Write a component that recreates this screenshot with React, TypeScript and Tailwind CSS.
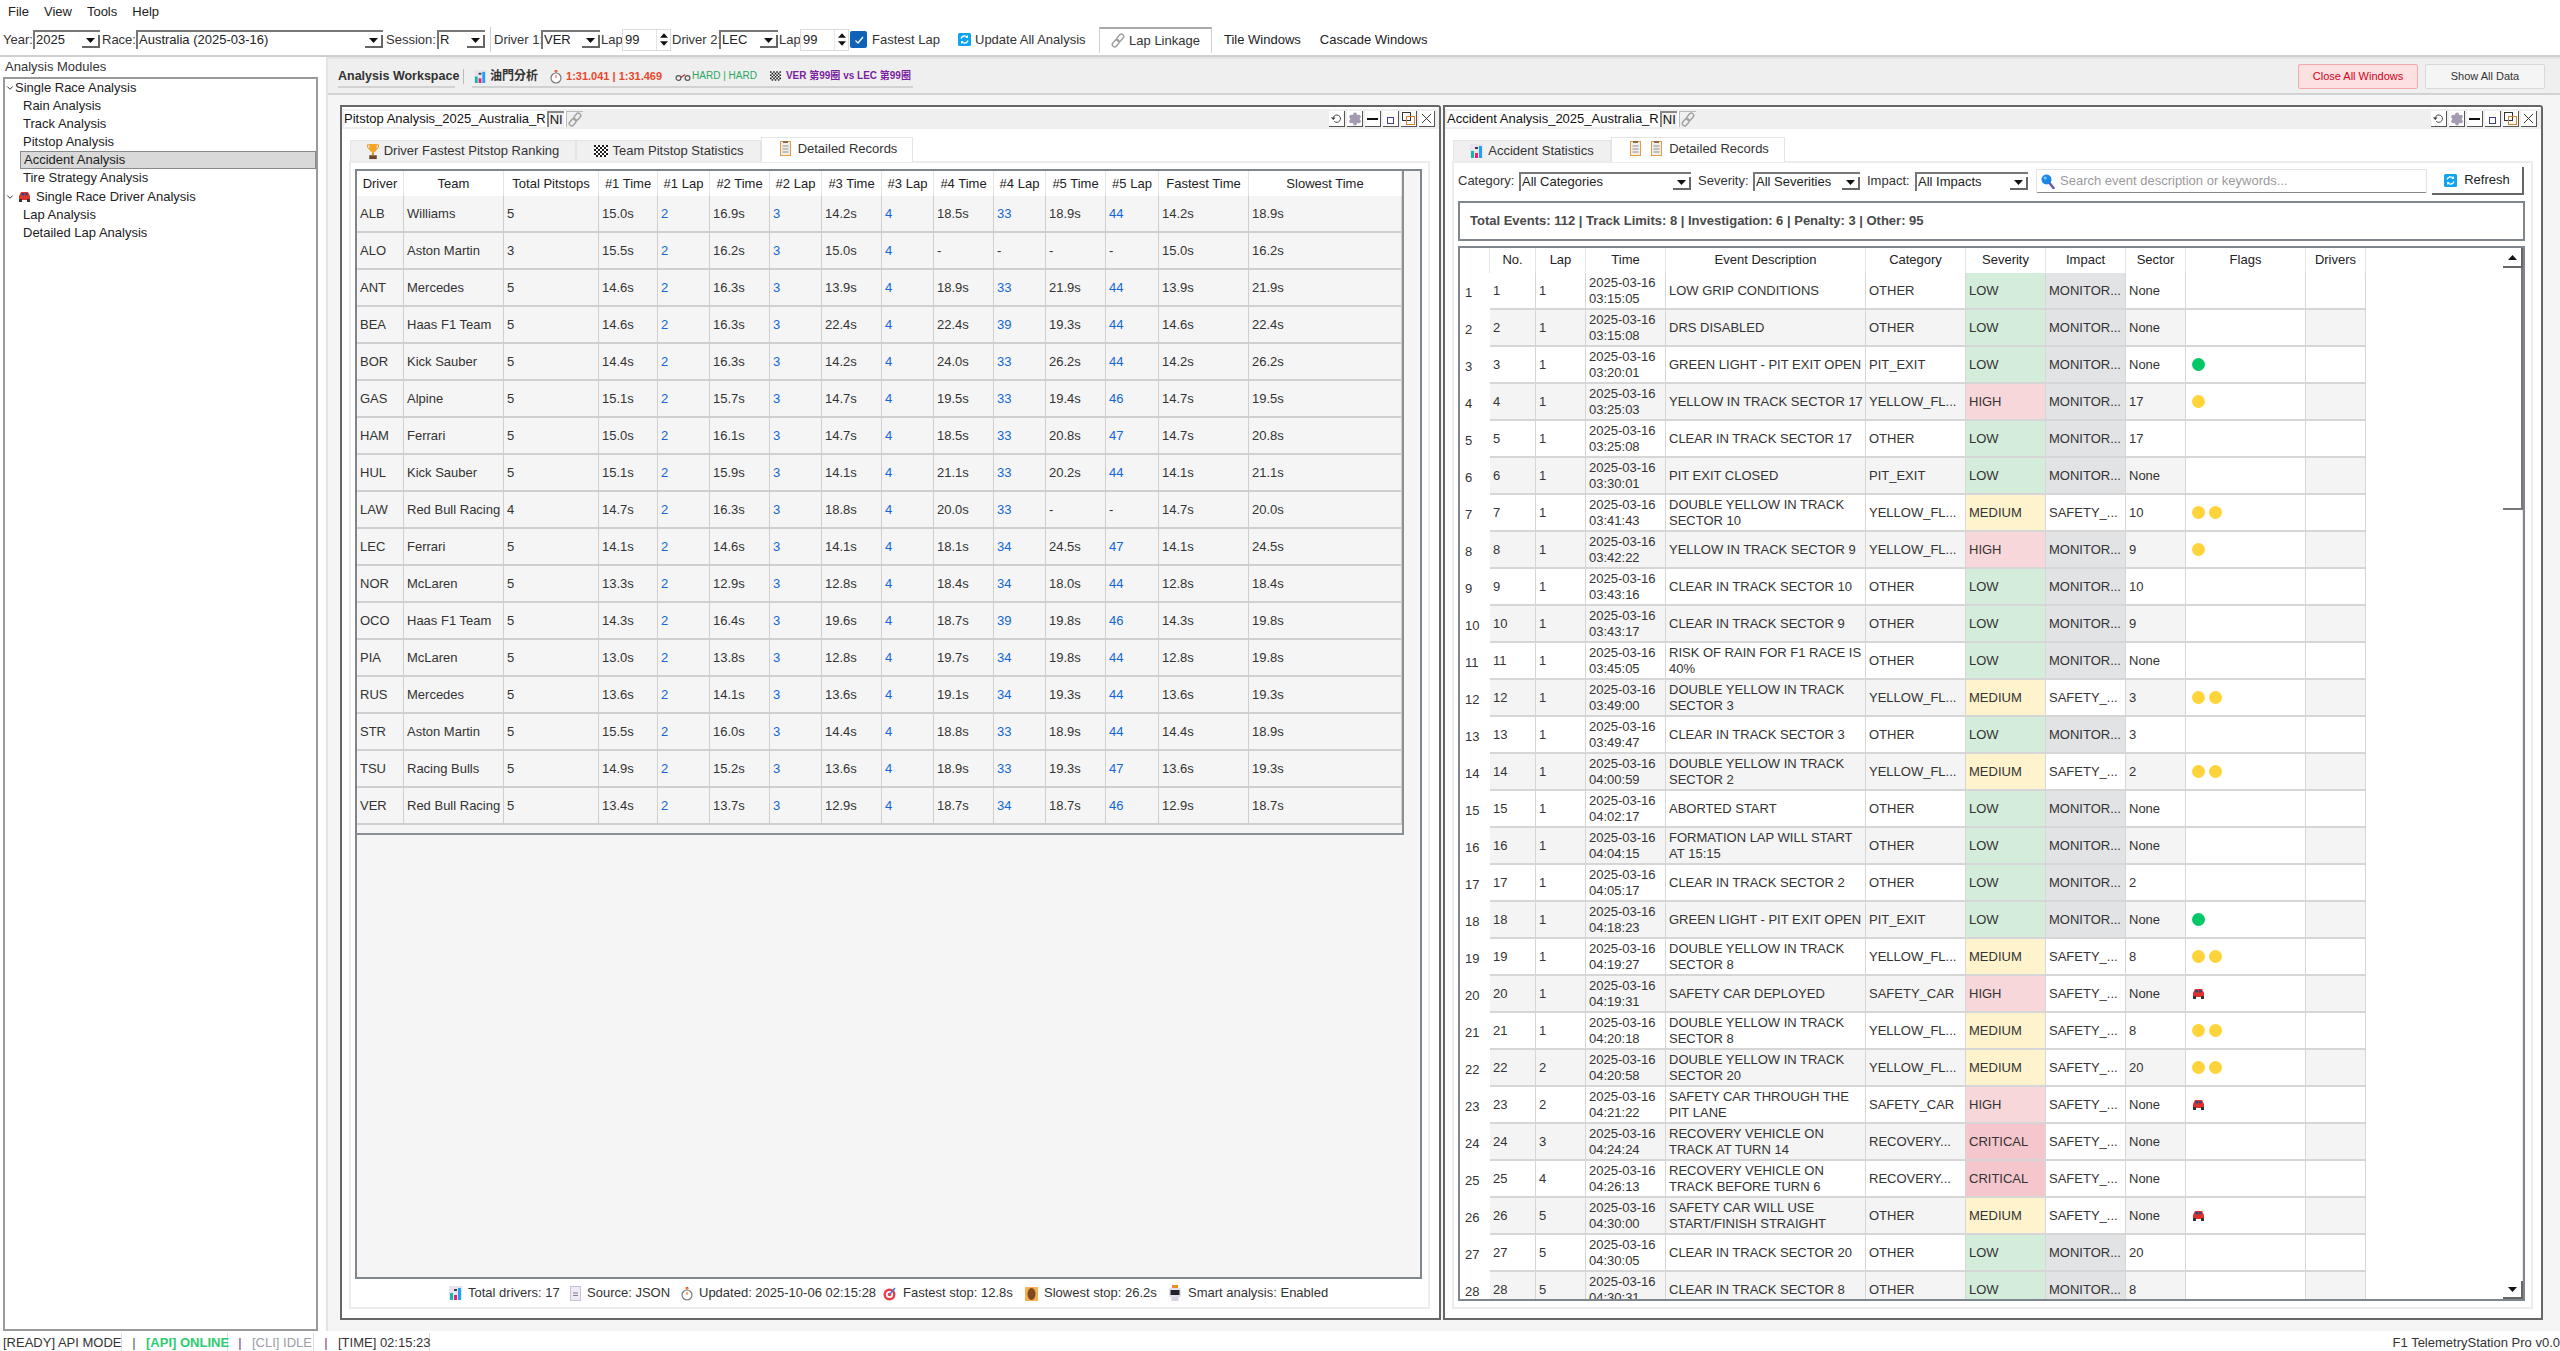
import { ChevronDown, Settings } from "lucide-react";
import type { ReactNode } from "react";

const font = "font-['Liberation_Sans','Noto_Sans_CJK_TC',sans-serif]";

/* small emoji-like icons */
const BarsIcon = ({ className = "w-[13px] h-[14px]" }: { className?: string }) => (
  <svg viewBox="0 0 13 14" className={className}>
    <rect width="13" height="14" fill="#e8e4ee" />
    <rect x="1" y="7" width="3" height="7" fill="#14b8a6" />
    <rect x="5" y="9" width="3" height="5" fill="#ec1e79" />
    <rect x="9" y="2" width="3" height="12" fill="#1da1f2" />
    <rect x="5" y="3" width="3" height="2" fill="#3b3b4f" />
  </svg>
);
const MemoIcon = () => (
  <svg viewBox="0 0 11 15" className="w-[11px] h-[15px]">
    <rect x="0.5" y="0.5" width="10" height="14" fill="#f0eee8" stroke="#e59a4a" />
    <rect x="3" y="0" width="5" height="2" fill="#8a6a4a" />
    <path d="M2.5 5h6M2.5 8h6M2.5 11h6" stroke="#8f8f8f" strokeWidth="1.2" />
  </svg>
);
const DocIcon = () => (
  <svg viewBox="0 0 11 15" className="w-[11px] h-[15px]">
    <rect x="0.5" y="0.5" width="10" height="14" fill="#efe9f5" stroke="#c9c2d6" />
    <path d="M3 7h5M3 9.5h5" stroke="#7d7d8c" />
  </svg>
);
const TrophyIcon = () => (
  <svg viewBox="0 0 12 18" className="w-[12px] h-[17px]">
    <path d="M2 1h8v4c0 3-2 5-4 5S2 8 2 5z" fill="#f5a623" />
    <path d="M2 2H0c0 3 1 4 3 5M10 2h2c0 3-1 4-3 5" fill="none" stroke="#d98e14" />
    <rect x="5" y="10" width="2" height="3" fill="#d98e14" />
    <rect x="2" y="13" width="8" height="4" fill="#6b4a2a" />
  </svg>
);
const CheckerIcon = ({ className = "w-[14px] h-[12px]" }: { className?: string }) => (
  <svg viewBox="0 0 14 12" className={className}>
    <rect width="14" height="12" fill="#fff" />
    <path d="M0 0h2v2H0zM4 0h2v2H4zM8 0h2v2H8zM12 0h2v2h-2zM2 2h2v2H2zM6 2h2v2H6zM10 2h2v2h-2zM0 4h2v2H0zM4 4h2v2H4zM8 4h2v2H8zM12 4h2v2h-2zM2 6h2v2H2zM6 6h2v2H6zM10 6h2v2h-2zM0 8h2v2H0zM4 8h2v2H4zM8 8h2v2H8zM12 8h2v2h-2zM2 10h2v2H2zM6 10h2v2H6zM10 10h2v2h-2z" fill="#1c1c1c" />
  </svg>
);
const CarIcon = () => (
  <svg viewBox="0 0 13 11" className="w-[13px] h-[11px]">
    <path d="M3 1h7l2 4v4H1V5z" fill="#e0322d" />
    <rect x="3.5" y="2" width="2.6" height="2.4" fill="#2b4a80" />
    <rect x="7" y="2" width="2.6" height="2.4" fill="#2b4a80" />
    <rect x="1" y="8" width="3" height="3" fill="#333" />
    <rect x="9" y="8" width="3" height="3" fill="#333" />
  </svg>
);
const WatchIcon = () => (
  <svg viewBox="0 0 12 15" className="w-[12px] h-[15px]">
    <circle cx="6" cy="9" r="5" fill="#fff" stroke="#777" strokeWidth="1.2" />
    <path d="M6 9V6M5 1.5h2V3H5z" stroke="#e2572b" fill="none" />
  </svg>
);
const TargetIcon = () => (
  <svg viewBox="0 0 14 15" className="w-[14px] h-[15px]">
    <circle cx="6.5" cy="8.5" r="6" fill="#ee3a43" />
    <circle cx="6.5" cy="8.5" r="3.6" fill="#fff" />
    <circle cx="6.5" cy="8.5" r="1.8" fill="#ee3a43" />
    <path d="M7 8l5-6" stroke="#2b7de0" strokeWidth="1.4" />
  </svg>
);
const BagIcon = () => (
  <svg viewBox="0 0 13 16" className="w-[13px] h-[16px]">
    <rect y="2" width="13" height="14" rx="1" fill="#f5b04f" />
    <ellipse cx="6.5" cy="9" rx="4" ry="6" fill="#7d4a24" />
  </svg>
);
const RobotIcon = () => (
  <svg viewBox="0 0 14 16" className="w-[14px] h-[16px]">
    <rect x="4" y="0" width="6" height="3" fill="#f08a24" />
    <rect x="1" y="3" width="12" height="9" rx="1" fill="#e4e0ea" />
    <rect x="2.5" y="5" width="9" height="5" fill="#22222c" />
    <rect x="3.5" y="12" width="7" height="4" fill="#d8d2e0" />
  </svg>
);
const RefreshIcon = ({ className = "w-[13px] h-[13px]" }: { className?: string }) => (
  <svg viewBox="0 0 13 13" className={className}>
    <rect width="13" height="13" rx="1.5" fill="#0ea5f0" />
    <path d="M3 5.5a3.6 3.6 0 0 1 6.4-1M10 7.5a3.6 3.6 0 0 1-6.4 1" fill="none" stroke="#fff" strokeWidth="1.3" />
    <path d="M10 2v3H7.2M3 11V8h2.8" fill="#fff" />
  </svg>
);
const SearchIcon = () => (
  <svg viewBox="0 0 14 15" className="w-[14px] h-[15px]">
    <path d="M8.5 9l4 5" stroke="#6d5aa8" strokeWidth="2.6" strokeLinecap="round" />
    <circle cx="5.5" cy="5.5" r="5" fill="#1c86e4" />
    <circle cx="4.2" cy="4" r="1.6" fill="#7fc4f7" />
  </svg>
);
const LinkIcon = () => (
  <svg viewBox="0 0 14 16" className="w-[14px] h-[15px]">
    <g fill="none" stroke="#a2a2a2" strokeWidth="1.6" transform="rotate(-50 7 8)">
      <rect x="-1" y="5.5" width="8.5" height="5" rx="2.5" />
      <rect x="6.5" y="5.5" width="8.5" height="5" rx="2.5" />
    </g>
  </svg>
);
const TireIcon = () => (
  <svg viewBox="0 0 16 9" className="w-[16px] h-[9px]">
    <circle cx="3.5" cy="6" r="2.4" fill="none" stroke="#555" strokeWidth="1.2" />
    <circle cx="12.5" cy="6" r="2.4" fill="none" stroke="#555" strokeWidth="1.2" />
    <path d="M6 5.5l4-3" stroke="#c0392b" strokeWidth="1.2" />
  </svg>
);

const Caret = () => (
  <svg viewBox="0 0 9 5" className="w-[9px] h-[5px]">
    <path d="M0 0h9L4.5 5z" fill="#111" />
  </svg>
);

const Combo = ({ value, className }: { value: string; className: string }) => (
  <div className={`flex h-[19px] shrink-0 items-start border-l-2 border-t-2 border-[#777] bg-white pl-[1px] text-[13px] leading-[16px] text-[#222] ${className}`}>
    <span className="flex-1 truncate">{value}</span>
    <span className="mt-[3px] flex h-[13px] w-[18px] items-center justify-center border-b-2 border-r-2 border-[#666]">
      <Caret />
    </span>
  </div>
);

const Spin = ({ value }: { value: string }) => (
  <div className="flex h-[22px] w-[49px] shrink-0 items-center border border-[#dcdcdc] bg-white pl-[2px] text-[13px] text-[#222]">
    <span className="flex-1">{value}</span>
    <span className="flex h-full w-[14px] flex-col items-center justify-center gap-[3px] border-l border-[#e6e6e6]">
      <svg viewBox="0 0 9 5" className="w-[8px] h-[5px]"><path d="M4.5 0L9 5H0z" fill="#111" /></svg>
      <svg viewBox="0 0 9 5" className="w-[8px] h-[5px]"><path d="M0 0h9L4.5 5z" fill="#111" /></svg>
    </span>
  </div>
);

/* --- data --- */
const pitColumns = [
  ["Driver", "w-[47px]"], ["Team", "w-[100px]"], ["Total Pitstops", "w-[95px]"], ["#1 Time", "w-[59px]"], ["#1 Lap", "w-[52px]"],
  ["#2 Time", "w-[60px]"], ["#2 Lap", "w-[52px]"], ["#3 Time", "w-[60px]"], ["#3 Lap", "w-[52px]"], ["#4 Time", "w-[60px]"],
  ["#4 Lap", "w-[52px]"], ["#5 Time", "w-[60px]"], ["#5 Lap", "w-[53px]"], ["Fastest Time", "w-[90px]"], ["Slowest Time", "w-[153px]"],
];

const pitRows = [
  "ALB,Williams,5,15.0s,2,16.9s,3,14.2s,4,18.5s,33,18.9s,44,14.2s,18.9s",
  "ALO,Aston Martin,3,15.5s,2,16.2s,3,15.0s,4,-,-,-,-,15.0s,16.2s",
  "ANT,Mercedes,5,14.6s,2,16.3s,3,13.9s,4,18.9s,33,21.9s,44,13.9s,21.9s",
  "BEA,Haas F1 Team,5,14.6s,2,16.3s,3,22.4s,4,22.4s,39,19.3s,44,14.6s,22.4s",
  "BOR,Kick Sauber,5,14.4s,2,16.3s,3,14.2s,4,24.0s,33,26.2s,44,14.2s,26.2s",
  "GAS,Alpine,5,15.1s,2,15.7s,3,14.7s,4,19.5s,33,19.4s,46,14.7s,19.5s",
  "HAM,Ferrari,5,15.0s,2,16.1s,3,14.7s,4,18.5s,33,20.8s,47,14.7s,20.8s",
  "HUL,Kick Sauber,5,15.1s,2,15.9s,3,14.1s,4,21.1s,33,20.2s,44,14.1s,21.1s",
  "LAW,Red Bull Racing,4,14.7s,2,16.3s,3,18.8s,4,20.0s,33,-,-,14.7s,20.0s",
  "LEC,Ferrari,5,14.1s,2,14.6s,3,14.1s,4,18.1s,34,24.5s,47,14.1s,24.5s",
  "NOR,McLaren,5,13.3s,2,12.9s,3,12.8s,4,18.4s,34,18.0s,44,12.8s,18.4s",
  "OCO,Haas F1 Team,5,14.3s,2,16.4s,3,19.6s,4,18.7s,39,19.8s,46,14.3s,19.8s",
  "PIA,McLaren,5,13.0s,2,13.8s,3,12.8s,4,19.7s,34,19.8s,44,12.8s,19.8s",
  "RUS,Mercedes,5,13.6s,2,14.1s,3,13.6s,4,19.1s,34,19.3s,44,13.6s,19.3s",
  "STR,Aston Martin,5,15.5s,2,16.0s,3,14.4s,4,18.8s,33,18.9s,44,14.4s,18.9s",
  "TSU,Racing Bulls,5,14.9s,2,15.2s,3,13.6s,4,18.9s,33,19.3s,47,13.6s,19.3s",
  "VER,Red Bull Racing,5,13.4s,2,13.7s,3,12.9s,4,18.7s,34,18.7s,46,12.9s,18.7s",
].map((r) => r.split(","));

const accColumns = [
  ["No.", "w-[46px]"], ["Lap", "w-[50px]"], ["Time", "w-[80px]"], ["Event Description", "w-[200px]"], ["Category", "w-[100px]"],
  ["Severity", "w-[80px]"], ["Impact", "w-[80px]"], ["Sector", "w-[60px]"], ["Flags", "w-[120px]"], ["Drivers", "w-[60px]"],
];

type Flag = "" | "g" | "y" | "yy" | "c";
const Y = "YELLOW_FL...";
const accRows: [number, string, string, string, string, string, Flag][] = [
  [1, "03:15:05", "LOW GRIP CONDITIONS", "OTHER", "LOW", "None", ""],
  [1, "03:15:08", "DRS DISABLED", "OTHER", "LOW", "None", ""],
  [1, "03:20:01", "GREEN LIGHT - PIT EXIT OPEN", "PIT_EXIT", "LOW", "None", "g"],
  [1, "03:25:03", "YELLOW IN TRACK SECTOR 17", Y, "HIGH", "17", "y"],
  [1, "03:25:08", "CLEAR IN TRACK SECTOR 17", "OTHER", "LOW", "17", ""],
  [1, "03:30:01", "PIT EXIT CLOSED", "PIT_EXIT", "LOW", "None", ""],
  [1, "03:41:43", "DOUBLE YELLOW IN TRACK SECTOR 10", Y, "MEDIUM", "10", "yy"],
  [1, "03:42:22", "YELLOW IN TRACK SECTOR 9", Y, "HIGH", "9", "y"],
  [1, "03:43:16", "CLEAR IN TRACK SECTOR 10", "OTHER", "LOW", "10", ""],
  [1, "03:43:17", "CLEAR IN TRACK SECTOR 9", "OTHER", "LOW", "9", ""],
  [1, "03:45:05", "RISK OF RAIN FOR F1 RACE IS 40%", "OTHER", "LOW", "None", ""],
  [1, "03:49:00", "DOUBLE YELLOW IN TRACK SECTOR 3", Y, "MEDIUM", "3", "yy"],
  [1, "03:49:47", "CLEAR IN TRACK SECTOR 3", "OTHER", "LOW", "3", ""],
  [1, "04:00:59", "DOUBLE YELLOW IN TRACK SECTOR 2", Y, "MEDIUM", "2", "yy"],
  [1, "04:02:17", "ABORTED START", "OTHER", "LOW", "None", ""],
  [1, "04:04:15", "FORMATION LAP WILL START AT\u00a015:15", "OTHER", "LOW", "None", ""],
  [1, "04:05:17", "CLEAR IN TRACK SECTOR 2", "OTHER", "LOW", "2", ""],
  [1, "04:18:23", "GREEN LIGHT - PIT EXIT OPEN", "PIT_EXIT", "LOW", "None", "g"],
  [1, "04:19:27", "DOUBLE YELLOW IN TRACK SECTOR 8", Y, "MEDIUM", "8", "yy"],
  [1, "04:19:31", "SAFETY CAR DEPLOYED", "SAFETY_CAR", "HIGH", "None", "c"],
  [1, "04:20:18", "DOUBLE YELLOW IN TRACK SECTOR 8", Y, "MEDIUM", "8", "yy"],
  [2, "04:20:58", "DOUBLE YELLOW IN TRACK SECTOR 20", Y, "MEDIUM", "20", "yy"],
  [2, "04:21:22", "SAFETY CAR THROUGH THE PIT\u00a0LANE", "SAFETY_CAR", "HIGH", "None", "c"],
  [3, "04:24:24", "RECOVERY VEHICLE ON TRACK AT TURN 14", "RECOVERY...", "CRITICAL", "None", ""],
  [4, "04:26:13", "RECOVERY VEHICLE ON TRACK BEFORE TURN 6", "RECOVERY...", "CRITICAL", "None", ""],
  [5, "04:30:00", "SAFETY CAR WILL USE START/FINISH STRAIGHT", "OTHER", "MEDIUM", "None", "c"],
  [5, "04:30:05", "CLEAR IN TRACK SECTOR 20", "OTHER", "LOW", "20", ""],
  [5, "04:30:31", "CLEAR IN TRACK SECTOR 8", "OTHER", "LOW", "8", ""],
];

const severityBg: Record<string, string> = {
  LOW: "bg-[#d4edda]",
  MEDIUM: "bg-[#fff3cd]",
  HIGH: "bg-[#f8d7da]",
  CRITICAL: "bg-[#f5c6cb]",
};

const Dot = ({ color }: { color: string }) => <span className={`h-[13px] w-[13px] rounded-full ${color}`} />;

const Flags = ({ flag }: { flag: Flag }) => {
  if (flag === "g") return <Dot color="bg-[#06c767]" />;
  if (flag === "y") return <Dot color="bg-[#ffd43b]" />;
  if (flag === "yy")
    return (
      <>
        <Dot color="bg-[#ffd43b]" />
        <Dot color="bg-[#ffd43b]" />
      </>
    );
  if (flag === "c") return <CarIcon />;
  return null;
};

/* --- window chrome --- */
const TitleBtn = ({ children }: { children: ReactNode }) => (
  <span className="flex h-[16px] w-[16px] items-center justify-center border-b border-r border-[#555] bg-white">{children}</span>
);

const Window = ({
  title,
  width,
  tabs,
  children,
}: {
  title: string;
  width: string;
  tabs: { icon: ReactNode; label: string; w: string; active?: boolean }[];
  children: ReactNode;
}) => (
  <section className={`flex h-[1215px] flex-col rounded-tr-[3px] border-2 border-[#666] bg-white pt-[2px] ${width}`}>
    <div className="flex h-[20px] shrink-0 items-center justify-between bg-[#efefef] pl-[2px] pr-[4px]">
      <div className="flex h-[16px] items-center bg-white text-[13px] text-[#111]">
        <span>{title}</span>
        <span className="ml-[1px] border-l-2 border-t-2 border-[#888] bg-[#f0f0f0] px-[1px] text-[13px] leading-[14px]">NI</span>
        <span className="ml-[2px] flex items-center border-l border-t border-[#bbb] bg-[#f0f0f0] px-[1px]">
          <LinkIcon />
        </span>
      </div>
      <div className="flex gap-[2px]">
        <TitleBtn>
          <svg viewBox="0 0 12 12" className="h-[11px] w-[11px]">
            <path d="M2.5 5a4 4 0 1 1 1 4" fill="none" stroke="#333" />
            <path d="M0 5h5L2.5 7.5z" fill="#333" />
          </svg>
        </TitleBtn>
        <TitleBtn>
          <Settings className="h-[14px] w-[14px] fill-[#a49bb3] text-[#a49bb3]" />
        </TitleBtn>
        <TitleBtn>
          <span className="h-[2px] w-[11px] bg-[#111]" />
        </TitleBtn>
        <TitleBtn>
          <span className="mt-[3px] h-[7px] w-[7px] border border-[#3d3d8a]" />
        </TitleBtn>
        <TitleBtn>
          <svg viewBox="0 0 13 13" className="h-[13px] w-[13px]">
            <rect x="0.5" y="0.5" width="8" height="8" fill="none" stroke="#333" />
            <rect x="4.5" y="4.5" width="8" height="8" fill="none" stroke="#d9822b" />
          </svg>
        </TitleBtn>
        <TitleBtn>
          <svg viewBox="0 0 12 12" className="h-[11px] w-[11px]">
            <path d="M1 1l10 10M11 1L1 11" stroke="#222" />
          </svg>
        </TitleBtn>
      </div>
    </div>
    <div className="ml-[7px] mt-[8px] flex h-[24px] shrink-0 items-end pl-[1px] text-[13px] text-[#333]">
      {tabs.map((t) => (
        <div
          key={t.label}
          className={`relative flex items-center justify-center border border-b-0 border-[#e4e4e4] ${t.w} ${
            t.active ? "z-10 -mb-[1px] h-[25px] gap-[7px] bg-white pb-[3px] pl-[3px]" : "h-[21px] gap-[5px] bg-[#f0f0f0]"
          }`}
        >
          {t.icon}
          <span>{t.label}</span>
        </div>
      ))}
    </div>
    <div className="ml-[7px] flex h-[1148px] w-[1081px] shrink-0 flex-col border-2 border-[#ececec] bg-white">{children}</div>
  </section>
);

const FooterItem = ({ icon, text, className }: { icon: ReactNode; text: string; className: string }) => (
  <span className={`flex shrink-0 items-center gap-[6px] ${className}`}>
    {icon}
    <span>{text}</span>
  </span>
);

/* --- the two tables --- */
const PitTable = () => (
  <div className="ml-[4px] mt-[6px] h-[1110px] w-[1067px] shrink-0 border-2 border-[#80868e] bg-[#f5f5f5]">
    <div className="h-[664px] w-[1047px] border-b-2 border-r-2 border-[#8b9097]">
      <table className="w-[1045px] table-fixed border-separate border-spacing-0 text-[13px] leading-[16px] text-[#333]">
        <colgroup>
          {pitColumns.map(([name, w]) => (
            <col key={name} className={w} />
          ))}
        </colgroup>
        <thead>
          <tr className="h-[25px] bg-white">
            {pitColumns.map(([name]) => (
              <th key={name} className="border-r border-[#e4e4e4] p-0 text-center font-normal text-[#222]">
                {name}
              </th>
            ))}
          </tr>
        </thead>
        <tbody>
          {pitRows.map((r) => (
            <tr key={r[0]} className="h-[37px]">
              {r.map((c, i) => (
                <td
                  key={i}
                  className={`border-b-2 border-r border-[#cfcfcf] px-[3px] py-0 ${
                    i >= 4 && i <= 12 && i % 2 === 0 && c !== "-" ? "text-[#1167d8]" : ""
                  }`}
                >
                  {c}
                </td>
              ))}
            </tr>
          ))}
        </tbody>
      </table>
    </div>
  </div>
);

const AccTable = () => (
  <div className="ml-[4px] mt-[5px] flex h-[1055px] w-[1067px] shrink-0 overflow-hidden border-2 border-[#80868e] bg-white">
    <div className="w-[1043px] shrink-0 overflow-hidden">
      <table className="w-[906px] table-fixed border-separate border-spacing-0 text-[13px] leading-[16px] text-[#333]">
        <colgroup>
          <col className="w-[30px]" />
          {accColumns.map(([name, w]) => (
            <col key={name} className={w} />
          ))}
        </colgroup>
        <thead>
          <tr className="h-[25px] bg-white">
            <th className="border-r border-[#e4e4e4] p-0" />
            {accColumns.map(([name]) => (
              <th key={name} className="border-r border-[#e4e4e4] p-0 pb-[2px] text-center font-normal text-[#222]">
                {name}
              </th>
            ))}
          </tr>
        </thead>
        <tbody>
          {accRows.map(([lap, time, desc, cat, sev, sector, flag], idx) => {
            const n = idx + 1;
            const zebra = n % 2 === 0 ? "bg-[#f4f4f4]" : "bg-white";
            const cell = "border-b-2 border-r border-[#d6d6d6] px-[3px] py-0";
            const isSafety = flag === "yy" || flag === "c" || cat === "RECOVERY...";
            return (
              <tr key={n} className="h-[37px]">
                <td className="bg-white py-0 pl-[5px] pr-0 pt-[2px]">{n}</td>
                <td className={`${cell} ${zebra}`}>{n}</td>
                <td className={`${cell} ${zebra}`}>{lap}</td>
                <td className={`${cell} ${zebra}`}>
                  2025-03-16
                  <br />
                  {time}
                </td>
                <td className={`border-b-2 border-r border-[#d6d6d6] py-0 pl-[3px] pr-0 whitespace-normal ${zebra}`}>{desc}</td>
                <td className={`${cell} ${zebra}`}>{cat}</td>
                <td className={`${cell} ${severityBg[sev]}`}>{sev}</td>
                <td className={`${cell} ${isSafety ? "bg-white" : "bg-[#e2e3e5]"}`}>{isSafety ? "SAFETY_..." : "MONITOR..."}</td>
                <td className={`${cell} ${zebra}`}>{sector}</td>
                <td className={`${cell} bg-white`}>
                  <span className="flex items-center gap-[4px] pl-[3px]">
                    <Flags flag={flag} />
                  </span>
                </td>
                <td className={`${cell} ${zebra}`} />
              </tr>
            );
          })}
        </tbody>
      </table>
    </div>
    {/* vertical scroll bar */}
    <div className="flex w-[20px] shrink-0 flex-col">
      <div className="flex h-[20px] items-center justify-center border-b-2 border-r-2 border-[#666]">
        <svg viewBox="0 0 9 5" className="h-[5px] w-[9px]"><path d="M4.5 0L9 5H0z" fill="#111" /></svg>
      </div>
      <div className="h-[242px] border-b-2 border-r-2 border-[#777]" />
      <div className="flex-1 border-r border-[#e6e6e6]" />
      <div className="flex h-[18px] items-center justify-center border-b-2 border-r-2 border-[#666]">
        <Caret />
      </div>
    </div>
  </div>
);

const TreeRow = ({ label, selected }: { label: string; selected?: boolean }) => (
  <div
    className={`ml-[15px] flex h-[18px] items-center pl-[3px] text-[13px] text-[#222] ${
      selected ? "mr-0 border border-[#8a8a8a] bg-[#d9d9d9] pl-[2px]" : ""
    }`}
  >
    {label}
  </div>
);

export default function App() {
  return (
    <div className={`flex h-[1351px] w-[2560px] flex-col overflow-hidden whitespace-nowrap bg-white text-[13px] ${font}`}>
      {/* Menu bar */}
      <nav className="flex h-[24px] shrink-0 items-center gap-[15px] pl-[8px] text-[13px] text-[#222]">
        <span>File</span>
        <span>View</span>
        <span>Tools</span>
        <span>Help</span>
      </nav>

      {/* Toolbar */}
      <div className="flex h-[33px] shrink-0 items-center border-b-2 border-[#cfcfcf] pl-[3px] text-[13px] text-[#333]">
        <span className="w-[30px] shrink-0">Year:</span>
        <Combo value="2025" className="w-[67px]" />
        <span className="ml-[2px] w-[34px] shrink-0">Race:</span>
        <Combo value="Australia (2025-03-16)" className="w-[247px]" />
        <span className="ml-[3px] w-[51px] shrink-0">Session:</span>
        <Combo value="R" className="w-[48px]" />
        <span className="ml-[5px] h-[25px] w-px shrink-0 bg-[#cfcfcf]" />
        <span className="ml-[3px] w-[47px] shrink-0">Driver 1:</span>
        <Combo value="VER" className="w-[59px]" />
        <span className="ml-[1px] w-[21px] shrink-0">Lap</span>
        <Spin value="99" />
        <span className="ml-[1px] w-[47px] shrink-0">Driver 2:</span>
        <Combo value="LEC" className="w-[59px]" />
        <span className="ml-[1px] w-[21px] shrink-0">Lap</span>
        <Spin value="99" />
        <span className="ml-[1px] flex h-[17px] w-[17px] shrink-0 items-center justify-center rounded-[2px] bg-[#0f62b8]">
          <svg viewBox="0 0 10 10" className="h-[10px] w-[10px]">
            <path d="M1.5 5.5l2.5 2.5 5-6" fill="none" stroke="#fff" strokeWidth="1.2" />
          </svg>
        </span>
        <span className="ml-[5px] w-[86px] shrink-0">Fastest Lap</span>
        <RefreshIcon />
        <span className="ml-[4px] w-[124px] shrink-0">Update All Analysis</span>
        <button className="flex h-[26px] w-[113px] shrink-0 items-center justify-center gap-[4px] border-x border-t-2 border-[#d0d0d0] border-t-[#a8a8a8] text-[13px] text-[#333]">
          <LinkIcon />
          Lap Linkage
        </button>
        <span className="ml-[12px] text-[#222]">Tile Windows</span>
        <span className="ml-[19px] text-[#222]">Cascade Windows</span>
      </div>

      {/* Body */}
      <div className="flex min-h-0 flex-1">
        <aside className="flex w-[326px] shrink-0 flex-col pl-[3px]">
          <div className="flex h-[20px] shrink-0 items-center pl-[2px] text-[#333]">Analysis Modules</div>
          <div className="w-[315px] flex-1 border-2 border-[#999]">
            <div className="flex h-[18px] items-center text-[#222]">
              <ChevronDown className="h-[10px] w-[10px] text-[#111]" strokeWidth={2} />
              <span>Single Race Analysis</span>
            </div>
            <TreeRow label="Rain Analysis" />
            <TreeRow label="Track Analysis" />
            <TreeRow label="Pitstop Analysis" />
            <TreeRow label="Accident Analysis" selected />
            <TreeRow label="Tire Strategy Analysis" />
            <div className="flex h-[19px] items-center text-[#222]">
              <ChevronDown className="h-[10px] w-[10px] text-[#111]" strokeWidth={2} />
              <span className="ml-[3px]">
                <CarIcon />
              </span>
              <span className="ml-[5px]">Single Race Driver Analysis</span>
            </div>
            <TreeRow label="Lap Analysis" />
            <TreeRow label="Detailed Lap Analysis" />
          </div>
        </aside>

        <main className="flex min-w-0 flex-1 flex-col border-l-2 border-t-2 border-[#e4e4e4] bg-[#f5f5f5]">
          {/* Workspace header */}
          <div className="flex h-[36px] shrink-0 items-center border-b-2 border-[#d2d2d2] bg-[#efefef] pl-[10px] pr-[15px]">
            <span className="w-[117px] shrink-0 border-b-2 border-[#d2d2d2] pb-[2px] pt-[4px] text-[12.5px] font-bold leading-[16px] text-[#333]">
              Analysis Workspace
            </span>
            <span className="ml-[8px] h-[15px] w-px bg-[#bbb]" />
            <div className="ml-[8px] flex items-center border-b-2 border-[#d2d2d2] pb-[2px] pt-[4px] pr-[2px] text-[11px] font-bold leading-[16px]">
              <span className="ml-[2px]">
                <BarsIcon className="h-[13px] w-[12px]" />
              </span>
              <span className="ml-[4px] text-[12px] text-[#333]">油門分析</span>
              <span className="ml-[12px]">
                <WatchIcon />
              </span>
              <span className="ml-[4px] text-[#e8472a]">1:31.041 | 1:31.469</span>
              <span className="ml-[13px]">
                <TireIcon />
              </span>
              <span className="ml-[1px] text-[10px] font-normal text-[#27a860]">HARD | HARD</span>
              <span className="ml-[13px]">
                <CheckerIcon className="h-[10px] w-[11px]" />
              </span>
              <span className="ml-[5px] text-[10px] text-[#7b1fa2]">VER 第99圈 vs LEC 第99圈</span>
            </div>
            <button className="ml-auto flex h-[25px] w-[120px] items-center justify-center rounded-[2px] border border-[#f5a9a9] bg-[#fde0e0] text-[11px] text-[#d0021b]">
              Close All Windows
            </button>
            <button className="ml-[7px] flex h-[25px] w-[120px] items-center justify-center rounded-[2px] border border-[#d8d8d8] bg-[#f5f5f5] text-[11px] text-[#333]">
              Show All Data
            </button>
          </div>

          {/* MDI area */}
          <div className="flex gap-[2px] pl-[12px] pt-[10px]">
            <Window
              title="Pitstop Analysis_2025_Australia_R"
              width="w-[1101px]"
              tabs={[
                { icon: <TrophyIcon />, label: "Driver Fastest Pitstop Ranking", w: "w-[226px]" },
                { icon: <CheckerIcon />, label: "Team Pitstop Statistics", w: "w-[185px]" },
                { icon: <MemoIcon />, label: "Detailed Records", w: "w-[152px]", active: true },
              ]}
            >
              <PitTable />
              <div className="flex flex-1 items-center pl-[98px] text-[13px] text-[#333]">
                <FooterItem icon={<BarsIcon />} text="Total drivers: 17" className="w-[121px]" />
                <FooterItem icon={<DocIcon />} text="Source: JSON" className="w-[111px]" />
                <FooterItem icon={<WatchIcon />} text="Updated: 2025-10-06 02:15:28" className="w-[202px]" />
                <FooterItem icon={<TargetIcon />} text="Fastest stop: 12.8s" className="w-[142px]" />
                <FooterItem icon={<BagIcon />} text="Slowest stop: 26.2s" className="w-[143px]" />
                <FooterItem icon={<RobotIcon />} text="Smart analysis: Enabled" className="w-[170px]" />
              </div>
            </Window>

            <Window
              title="Accident Analysis_2025_Australia_R"
              width="w-[1100px]"
              tabs={[
                { icon: <BarsIcon />, label: "Accident Statistics", w: "w-[158px]" },
                {
                  icon: (
                    <span className="flex gap-[10px]">
                      <MemoIcon />
                      <MemoIcon />
                    </span>
                  ),
                  label: "Detailed Records",
                  w: "w-[174px]",
                  active: true,
                },
              ]}
            >
              {/* Filters */}
              <div className="ml-[4px] mt-[4px] flex h-[28px] w-[1067px] shrink-0 items-center text-[13px] text-[#333]">
                <span className="w-[61px] shrink-0">Category:</span>
                <Combo value="All Categories" className="w-[172px]" />
                <span className="ml-[7px] w-[55px] shrink-0">Severity:</span>
                <Combo value="All Severities" className="w-[107px]" />
                <span className="ml-[7px] w-[48px] shrink-0">Impact:</span>
                <Combo value="All Impacts" className="w-[113px]" />
                <div className="ml-[8px] flex h-[24px] w-[391px] shrink-0 items-center gap-[5px] rounded-[2px] border border-[#e2e2e2] border-b-[#888] bg-white pl-[4px] text-[#9a9a9a]">
                  <SearchIcon />
                  Search event description or keywords...
                </div>
                <button className="ml-[5px] flex h-[28px] w-[92px] shrink-0 items-center justify-center gap-[7px] border-b-2 border-r-2 border-[#666] bg-white text-[13px] text-[#222]">
                  <RefreshIcon />
                  Refresh
                </button>
              </div>
              {/* Summary */}
              <div className="ml-[4px] mt-[6px] flex h-[40px] w-[1067px] shrink-0 items-center border-2 border-[#80868e] pl-[10px] text-[13px] font-bold text-[#4a4a4a]">
                Total Events: 112 | Track Limits: 8 | Investigation: 6 | Penalty: 3 | Other: 95
              </div>
              <AccTable />
            </Window>
          </div>
        </main>
      </div>

      {/* Status bar */}
      <footer className="flex h-[20px] shrink-0 items-center overflow-hidden pl-[3px] pt-[4px] text-[13px] text-[#333]">
        <span className="w-[119px] shrink-0 border-r border-[#ddd]">[READY] API MODE</span>
        <span className="w-[24px] shrink-0 text-center text-[#555]">|</span>
        <span className="w-[82px] shrink-0 border-r border-[#ddd] font-bold text-[#2ecc71]">[API] ONLINE</span>
        <span className="w-[24px] shrink-0 text-center text-[#7b2d8b]">|</span>
        <span className="w-[62px] shrink-0 border-r border-[#ddd] text-[#9aa0a6]">[CLI] IDLE</span>
        <span className="w-[24px] shrink-0 text-center text-[#7b2d8b]">|</span>
        <span className="w-[92px] shrink-0 border-r border-[#ddd]">[TIME] 02:15:23</span>
        <span className="ml-auto">F1 TelemetryStation Pro v0.0</span>
      </footer>
    </div>
  );
}
